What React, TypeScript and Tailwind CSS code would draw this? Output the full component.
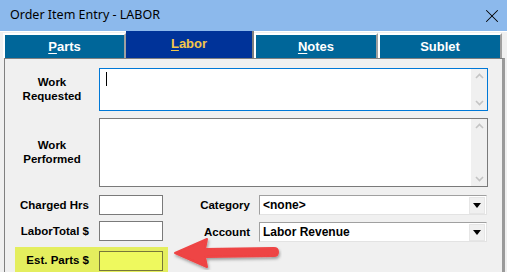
import { X } from "lucide-react";

const TABS = [
  { key: "parts", first: "P", rest: "arts", active: false, width: "w-[123px]" },
  { key: "labor", first: "L", rest: "abor", active: true, width: "w-[128px]" },
  { key: "notes", first: "N", rest: "otes", active: false, width: "w-[124px]" },
  { key: "sublet", first: "", rest: "Sublet", active: false, width: "w-[124px]" },
];

function Chevrons({ tall }: { tall?: boolean }) {
  return (
    <div className="w-[16px] bg-[#f0f0f0] flex flex-col items-center justify-between py-[4px] shrink-0">
      <svg width="9" height="6" viewBox="0 0 9 6">
        <path d="M1 5 L4.5 1.5 L8 5" fill="none" stroke="#c4c4c4" strokeWidth="1.6" />
      </svg>
      {tall ? <div className="flex-1" /> : null}
      <svg width="9" height="6" viewBox="0 0 9 6">
        <path d="M1 1 L4.5 4.5 L8 1" fill="none" stroke="#c4c4c4" strokeWidth="1.6" />
      </svg>
    </div>
  );
}

function Select({ value }: { value: string }) {
  return (
    <div className="w-[228px] h-[20px] flex border border-t-[#a0a0a0] border-l-[#a0a0a0] border-r-[#e3e3e3] border-b-[#e3e3e3] bg-white">
      <div className="flex-1 pl-[3px] text-[12px] leading-[18px] text-black">{value}</div>
      <div className="w-[16px] h-[17px] mt-[1px] mr-[1px] bg-[#f0f0f0] border border-[#e6e6e6] flex items-center justify-center">
        <svg width="8" height="5" viewBox="0 0 8 5">
          <path d="M0 0 H8 L4 5 Z" fill="#000" />
        </svg>
      </div>
    </div>
  );
}

export default function App() {
  return (
    <div
      className="w-[507px] h-[272px] bg-[#f0f0f0] overflow-hidden relative flex flex-col"
      style={{ fontFamily: "'Liberation Sans', Arial, sans-serif" }}
    >
      {/* Title bar */}
      <div className="h-[31px] bg-[#8cb9ec] flex items-center justify-between pl-[10px] pr-[4px] shrink-0">
        <span className="text-[12.5px] text-black" style={{ fontFamily: "'Noto Sans', sans-serif" }}>
          Order Item Entry - LABOR
        </span>
        <X className="w-[22px] h-[22px] text-black" strokeWidth={1.1} />
      </div>

      {/* Tabs */}
      <div className="h-[27px] flex items-end pl-[3px] border-t border-white shrink-0">
        {TABS.map((t) => (
          <div
            key={t.key}
            className={
              t.active
                ? `${t.width} h-[27px] pb-[2px] bg-[#003399] border-r-2 border-[#808080] flex items-center justify-center text-[13px] font-bold text-[#f3c64a]`
                : `${t.width} h-[25px] bg-[#006699] border-l-2 border-t-2 border-white border-r-2 border-r-[#a0a0a0] flex items-center justify-center text-[13px] font-bold text-white`
            }
          >
            {t.first ? <span className="underline underline-offset-2">{t.first}</span> : null}
            {t.rest}
          </div>
        ))}
      </div>

      {/* Panel */}
      <div className="ml-[4px] mr-[2px] flex-1 border-l border-t border-[#808080] border-r-[3px] border-r-[#9a9a9a] flex flex-col pt-[9px] text-[11.5px] font-bold text-black">
        <div className="flex">
          <div className="w-[94px] flex items-center justify-center text-center leading-[14px] pb-[2px]">
            Work
            <br />
            Requested
          </div>
          <div className="w-[389px] h-[43px] border border-[#0078d7] bg-white flex">
            <div className="flex-1 pl-[6px] pt-[3px]">
              <div className="w-px h-[14px] bg-black" />
            </div>
            <Chevrons />
          </div>
        </div>

        <div className="flex mt-[7px]">
          <div className="w-[94px] flex items-center justify-center text-center leading-[14px] pb-[2px]">
            Work
            <br />
            Performed
          </div>
          <div className="w-[389px] h-[69px] border border-[#7a7a7a] bg-white flex">
            <div className="flex-1" />
            <Chevrons tall />
          </div>
        </div>

        <div className="flex mt-[8px]">
          <div className="w-[158px] flex flex-col gap-[6px]">
            <div className="flex items-center">
              <div className="w-[84px] text-right pt-[1px]">Charged Hrs</div>
              <div className="ml-[10px] w-[64px] h-[20px] border border-[#7a7a7a] bg-white shrink-0" />
            </div>
            <div className="flex items-center">
              <div className="w-[84px] text-right pt-[1px]">LaborTotal $</div>
              <div className="ml-[10px] w-[64px] h-[20px] border border-[#7a7a7a] bg-white shrink-0" />
            </div>
            <div className="ml-[10px] w-[153px] h-[27px] bg-[#e4ee5e] flex items-center shrink-0">
              <div className="w-[74px] text-right pt-[1px]">Est. Parts $</div>
              <div className="ml-[10px] w-[64px] h-[20px] border border-[#77773a] bg-[#eef95e] shrink-0" />
            </div>
          </div>
          <div className="flex flex-col gap-[6px]">
            <div className="flex items-center">
              <div className="w-[87px] text-right pt-[1px]">Category</div>
              <div className="ml-[9px]">
                <Select value="<none>" />
              </div>
            </div>
            <div className="flex items-center mt-[1px]">
              <div className="w-[87px] text-right pt-[1px]">Account</div>
              <div className="ml-[9px]">
                <Select value="Labor Revenue" />
              </div>
            </div>
          </div>
        </div>
      </div>

      {/* Annotation arrow */}
      <svg className="absolute left-[172px] top-[236px]" width="110" height="34" viewBox="0 0 110 34">
        <defs>
          <filter id="sh" x="-20%" y="-30%" width="140%" height="160%">
            <feDropShadow dx="1" dy="2" stdDeviation="1.5" floodColor="#000" floodOpacity="0.35" />
          </filter>
        </defs>
        <path
          d="M3 17 L35 3 L33 13 L102 12 Q106 12 106 16 Q106 20 102 20 L33 21 L35 31 Z"
          fill="#ee4444"
          stroke="#ee4444"
          strokeLinejoin="round"
          strokeWidth="2"
          filter="url(#sh)"
        />
      </svg>
    </div>
  );
}
